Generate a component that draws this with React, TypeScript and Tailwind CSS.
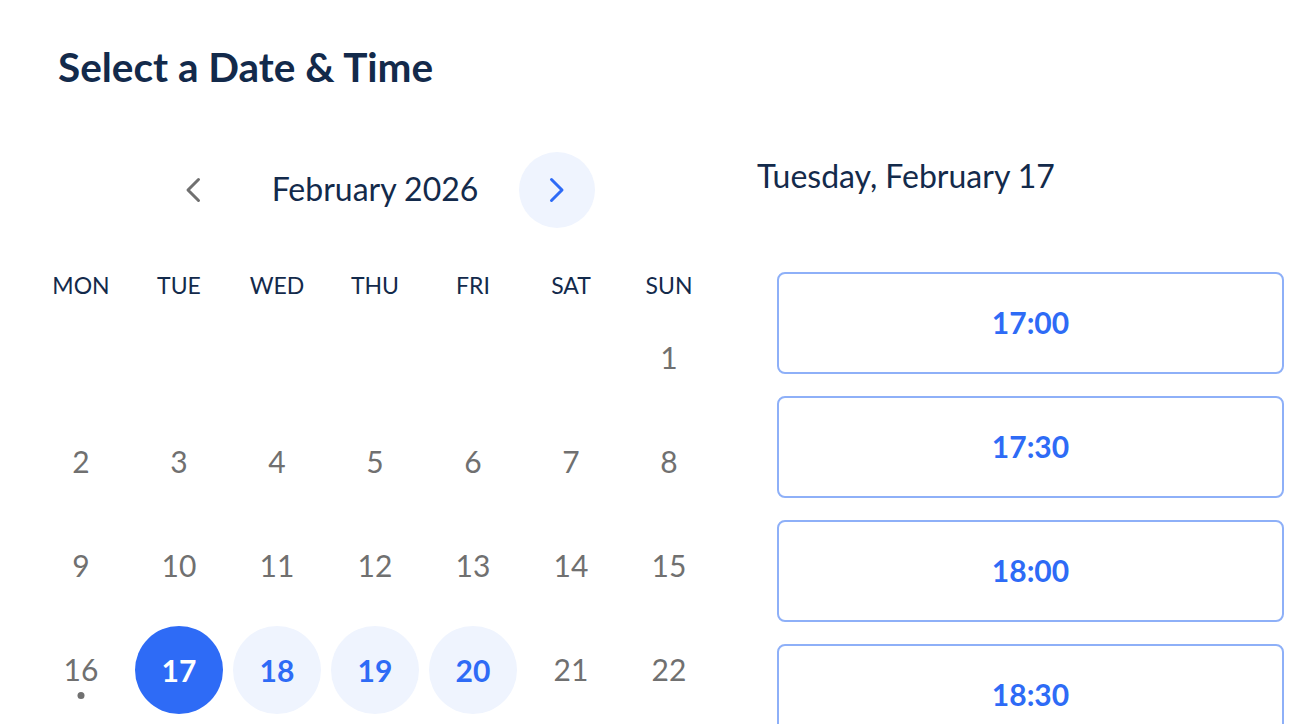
const weekDays = ['MON', 'TUE', 'WED', 'THU', 'FRI', 'SAT', 'SUN'];

// Feb 2026 starts on a Sunday
const cells: (number | null)[] = [null, null, null, null, null, null, 1, ...Array.from({ length: 21 }, (_, i) => i + 2)];
const available = [17, 18, 19, 20];
const selected = 17;
const today = 16;

const slots = ['17:00', '17:30', '18:00', '18:30'];

const Chevron = ({ dir }: { dir: 'left' | 'right' }) => (
  <svg width="18" height="26" viewBox="0 0 18 26" fill="none" stroke="currentColor" strokeWidth={3} strokeLinecap="round" strokeLinejoin="round">
    {dir === 'left' ? <path d="M14.5 2.5 L4 13 L14.5 23.5" /> : <path d="M3.5 2.5 L14 13 L3.5 23.5" />}
  </svg>
);

const DayCell = ({ day }: { day: number | null }) => {
  if (day === null) return <div className="h-[104px]" />;

  const isSelected = day === selected;
  const isAvailable = available.includes(day);

  return (
    <div className="h-[104px] flex items-center justify-center">
      {isSelected ? (
        <button className="w-[88px] h-[88px] rounded-full bg-[#2e6bf6] text-white font-bold text-[30px] flex items-center justify-center">
          {day}
        </button>
      ) : isAvailable ? (
        <button className="w-[88px] h-[88px] rounded-full bg-[#eff4fe] text-[#2e6bf6] font-bold text-[30px] flex items-center justify-center">
          {day}
        </button>
      ) : (
        <div className="relative w-[88px] h-[88px] flex items-center justify-center text-[30px] text-[#707070]">
          <span className="-translate-y-[1px]">{day}</span>
          {day === today && (
            <span className="absolute left-1/2 top-[66px] -translate-x-1/2 w-[7px] h-[7px] rounded-full bg-[#707070]" />
          )}
        </div>
      )}
    </div>
  );
};

export default function App() {
  return (
    <div className="w-[1314px] h-[724px] overflow-hidden bg-white font-['Lato',sans-serif] text-[#132a4b]">
      <h1 className="pl-[58px] pt-[43px] text-[40.5px] leading-[48px] font-bold">Select a Date &amp; Time</h1>

      <div className="flex pl-[32px] mt-[61px]">
        {/* Calendar */}
        <div className="w-[686px]">
          <div className="flex items-center justify-center gap-[41px]">
            <button className="w-[76px] h-[76px] rounded-full flex items-center justify-center text-[#707070]">
              <Chevron dir="left" />
            </button>
            <span className="text-[32px] leading-[40px] -translate-y-[1px]">February 2026</span>
            <button className="w-[76px] h-[76px] rounded-full bg-[#eff4fe] flex items-center justify-center text-[#2e6bf6]">
              <Chevron dir="right" />
            </button>
          </div>

          <div className="grid grid-cols-7 mt-[44px]">
            {weekDays.map((d) => (
              <div key={d} className="text-center text-[23px] leading-[28px] -translate-y-[1px]">
                {d}
              </div>
            ))}
          </div>

          <div className="grid grid-cols-7 mt-[6px]">
            {cells.map((day, i) => (
              <DayCell key={i} day={day} />
            ))}
          </div>
        </div>

        {/* Times */}
        <div className="ml-[39px] w-[527px]">
          <div className="text-[32px] leading-[36px] mt-[6px]">Tuesday, February 17</div>
          <div className="mt-[78px] pl-[20px] flex flex-col gap-[22px]">
            {slots.map((t) => (
              <button
                key={t}
                className="w-[507px] h-[102px] shrink-0 rounded-[8px] border-2 border-[#8eb0f8] text-[#2e6bf6] font-bold text-[30px] flex items-center justify-center"
              >
                <span className="-translate-y-[1px]">{t}</span>
              </button>
            ))}
          </div>
        </div>
      </div>
    </div>
  );
}
